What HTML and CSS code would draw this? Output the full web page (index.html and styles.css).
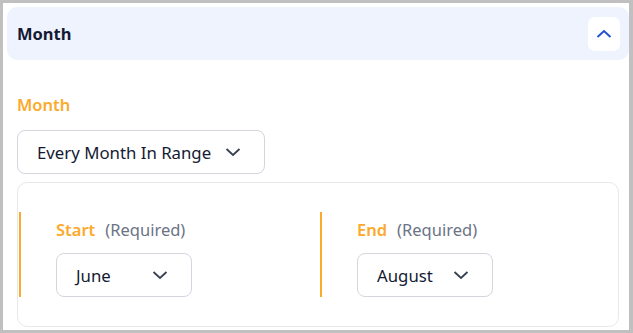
FILE: index.html
```html
<!DOCTYPE html>
<html lang="en">
<head>
    <meta charset="UTF-8">
    <meta name="viewport" content="width=device-width, initial-scale=1.0">
    <title>Month filter</title>
    <link rel="stylesheet" href="styles.css">
</head>
<body>

<div class="frame">
    <div class="panel">
        <header class="panel-header">
            <h2>Month</h2>
            <button class="collapse-btn" aria-label="Collapse">
                <svg width="16" height="10" viewBox="0 0 16 10"><path d="M1.5 8 L8 2 L14.5 8" fill="none" stroke="#2550d0" stroke-width="2"/></svg>
            </button>
        </header>

        <div class="panel-body">
            <label class="field-label">Month</label>
            <button class="select select-wide">
                <span>Every Month In Range</span>
                <svg class="chev" width="16" height="10" viewBox="0 0 16 10"><path d="M1.5 2 L8 8 L14.5 2" fill="none" stroke="#374151" stroke-width="1.8"/></svg>
            </button>

            <div class="range-card">
                <div class="range-col">
                    <div class="range-label"><span class="req-name">Start</span><span class="req">(Required)</span></div>
                    <button class="select select-month">
                        <span>June</span>
                        <svg class="chev" width="16" height="10" viewBox="0 0 16 10"><path d="M1.5 2 L8 8 L14.5 2" fill="none" stroke="#374151" stroke-width="1.8"/></svg>
                    </button>
                </div>
                <div class="range-col">
                    <div class="range-label"><span class="req-name">End</span><span class="req">(Required)</span></div>
                    <button class="select select-month">
                        <span>August</span>
                        <svg class="chev" width="16" height="10" viewBox="0 0 16 10"><path d="M1.5 2 L8 8 L14.5 2" fill="none" stroke="#374151" stroke-width="1.8"/></svg>
                    </button>
                </div>
            </div>
        </div>
    </div>
</div>

</body>
</html>
```

FILE: styles.css
```css
html, body {
    margin: 0;
    padding: 0;
    height: 100%;
}

body {
    font-family: 'Noto Sans', 'Open Sans', sans-serif;
    background-color: #c0c0c0;
    color: #1a1f36;
}

.frame {
    box-sizing: border-box;
    height: 333px;
    padding: 3px 4px 3px 3px;
}

.panel {
    background-color: #fff;
    height: 100%;
    padding: 4px 0 0 4px;
    box-sizing: border-box;
}

.panel-header {
    display: flex;
    align-items: center;
    justify-content: space-between;
    height: 53px;
    padding: 0 9px 0 10px;
    background-color: #eef3fe;
    border-radius: 10px;
}

.panel-header h2 {
    margin: 0;
    font-size: 16.5px;
    font-weight: 700;
    color: #141a33;
}

.collapse-btn {
    width: 32px;
    height: 34px;
    border: none;
    border-radius: 7px;
    background-color: #fff;
    display: flex;
    align-items: center;
    justify-content: center;
    padding: 0;
}

.panel-body {
    padding: 34px 10px 0 10px;
}

.field-label {
    display: block;
    font-size: 16.5px;
    font-weight: 600;
    color: #fbaa2b;
    line-height: 22px;
}

.select {
    display: flex;
    align-items: center;
    box-sizing: border-box;
    height: 44px;
    border: 1px solid #d3d6df;
    border-radius: 8px;
    background-color: #fff;
    font-family: inherit;
    font-size: 16.8px;
    color: #141a33;
    padding: 0 0 0 19px;
}

.select-wide {
    width: 248px;
    margin-top: 14px;
}

.select-wide .chev {
    margin-left: 14px;
}

.select-month {
    width: 136px;
}

.select-month span {
    flex: 1;
    text-align: left;
}

.select-month .chev {
    margin-right: 23px;
}

.range-card {
    margin-top: 8px;
    border: 1px solid #e6e8ec;
    border-radius: 10px;
    height: 145px;
    box-sizing: border-box;
    padding: 29px 0 0 1px;
    display: grid;
    grid-template-columns: 301px 1fr;
    align-items: start;
}

.range-col {
    border-left: 2px solid #fbaa2b;
    padding: 6px 0 0 35px;
    height: 85px;
    box-sizing: border-box;
}

.range-label {
    font-size: 16.5px;
    line-height: 23px;
    margin-bottom: 12px;
}

.req-name {
    color: #fbaa2b;
    font-weight: 600;
    margin-right: 10px;
}

.req {
    color: #6b7385;
}
```
